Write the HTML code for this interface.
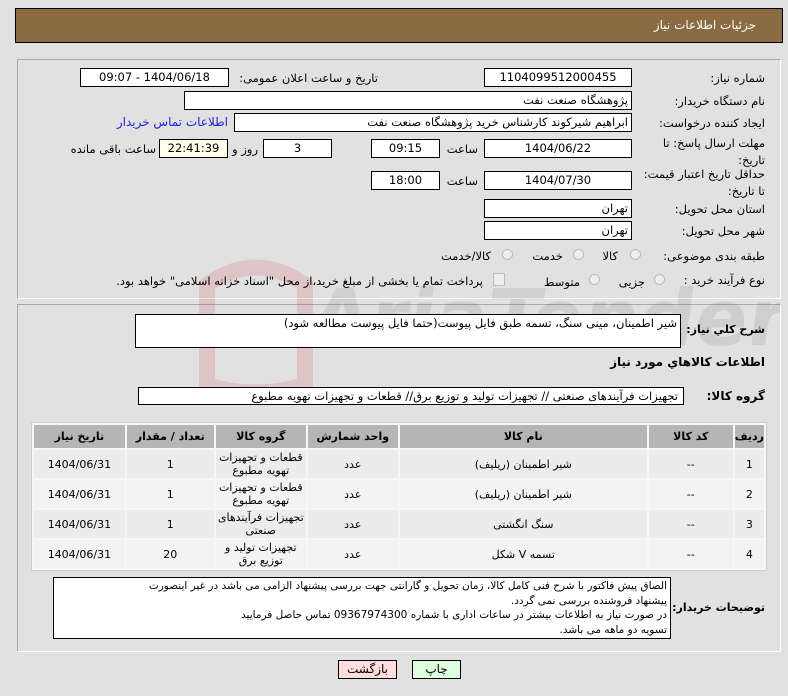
<!DOCTYPE html>
<html><head><meta charset="utf-8"><style>
body{margin:0;width:788px;height:696px;background:#e1e1e1;font-family:"DejaVu Sans","Liberation Sans",sans-serif;font-size:11.5px;color:#000;position:relative;overflow:hidden;direction:rtl}
.a{position:absolute;white-space:nowrap}
.box{position:absolute;background:#fff;border:1px solid #000;box-sizing:border-box;text-align:center;line-height:17px;white-space:nowrap;overflow:hidden}
.lbl{position:absolute;white-space:nowrap;text-align:right}
.panel{position:absolute;border:1px solid #a8a8a8;box-sizing:border-box;border-right-color:#fff;border-bottom-color:#fff}
.rad{position:absolute;width:11px;height:11px;border:1px solid #bbb;border-radius:50%;background:#eee;box-sizing:border-box}
table{position:absolute;border-collapse:separate;border-spacing:2px;background:#f7f7f7;border:1px solid #ccc}
th{background:#b5b5b5;font-weight:bold;height:23px;font-size:11px;padding:0}
td{background:#ececec;text-align:center;height:28px;font-size:11px;line-height:13px;padding:0}
tr.o td{background:#f3f3f3}
.btn{position:absolute;border:1px solid #000;box-sizing:border-box;text-align:center;line-height:16px;font-size:12px}
</style></head><body>
<div class="a" style="left:15px;top:8px;width:768px;height:35px;background:#8b6b42;border:1px solid #000;box-sizing:border-box"></div>
<div class="a" style="right:32px;top:18px;color:#fff;font-size:12px">جزئیات اطلاعات نیاز</div>
<div class="panel" style="left:17px;top:59px;width:764px;height:240px"></div>
<div class="panel" style="left:17px;top:304px;width:764px;height:348px"></div>

<svg class="a" style="left:195px;top:250px;opacity:.12" width="585" height="150"><path d="M12 135 L12 35 Q60 0 110 35 L110 135 Q60 150 12 135Z" fill="none" stroke="#c00" stroke-width="16"/><text x="125" y="95" font-size="78" font-weight="bold" fill="#555" font-family="DejaVu Sans" direction="ltr" transform="skewX(-8)">AriaTender.neT</text></svg>

<div class="lbl" style="right:23px;top:71px">شماره نیاز:</div>
<div class="box" style="left:484px;top:68px;width:148px;height:19px">1104099512000455</div>
<div class="lbl" style="right:410px;top:71px">تاریخ و ساعت اعلان عمومی:</div>
<div class="box" style="left:80px;top:68px;width:149px;height:19px">1404/06/18 - 09:07</div>

<div class="lbl" style="right:23px;top:94px">نام دستگاه خریدار:</div>
<div class="box" style="left:184px;top:91px;width:448px;height:19px;text-align:right;padding-right:3px">پژوهشگاه صنعت نفت</div>

<div class="lbl" style="right:23px;top:116px">ایجاد کننده درخواست:</div>
<div class="box" style="left:234px;top:113px;width:398px;height:19px;text-align:right;padding-right:3px">ابراهیم شیرکوند کارشناس خرید پژوهشگاه صنعت نفت</div>
<div class="lbl" style="right:560px;top:115px;color:#2222dd;font-size:12px">اطلاعات تماس خریدار</div>

<div class="lbl" style="right:23px;top:135px;line-height:17px">مهلت ارسال پاسخ: تا<br>تاریخ:</div>
<div class="box" style="left:484px;top:139px;width:148px;height:19px">1404/06/22</div>
<div class="lbl" style="right:310px;top:142px">ساعت</div>
<div class="box" style="left:371px;top:139px;width:69px;height:19px">09:15</div>
<div class="box" style="left:263px;top:139px;width:69px;height:19px">3</div>
<div class="lbl" style="right:530px;top:142px">روز و</div>
<div class="box" style="left:159px;top:139px;width:69px;height:19px;background:#ffffea">22:41:39</div>
<div class="lbl" style="right:632px;top:142px">ساعت باقی مانده</div>

<div class="lbl" style="right:23px;top:166px;line-height:17px">حداقل تاریخ اعتبار قیمت:<br>تا تاریخ:</div>
<div class="box" style="left:484px;top:171px;width:148px;height:19px">1404/07/30</div>
<div class="lbl" style="right:310px;top:174px">ساعت</div>
<div class="box" style="left:371px;top:171px;width:69px;height:19px">18:00</div>

<div class="lbl" style="right:23px;top:202px">استان محل تحویل:</div>
<div class="box" style="left:484px;top:199px;width:148px;height:19px;text-align:right;padding-right:3px">تهران</div>
<div class="lbl" style="right:23px;top:224px">شهر محل تحویل:</div>
<div class="box" style="left:484px;top:221px;width:148px;height:19px;text-align:right;padding-right:3px">تهران</div>

<div class="lbl" style="right:23px;top:249px">طبقه بندی موضوعی:</div>
<div class="rad" style="left:630px;top:249px"></div><div class="lbl" style="right:170px;top:249px">کالا</div>
<div class="rad" style="left:573px;top:249px"></div><div class="lbl" style="right:225px;top:249px">خدمت</div>
<div class="rad" style="left:502px;top:249px"></div><div class="lbl" style="right:297px;top:249px">کالا/خدمت</div>

<div class="lbl" style="right:23px;top:273px">نوع فرآیند خرید :</div>
<div class="rad" style="left:654px;top:274px"></div><div class="lbl" style="right:143px;top:275px">جزیی</div>
<div class="rad" style="left:589px;top:274px"></div><div class="lbl" style="right:208px;top:275px">متوسط</div>
<div class="a" style="left:493px;top:273px;width:10px;height:11px;border:1px solid #bbb;background:#eee"></div>
<div class="lbl" style="right:305px;top:274px">پرداخت تمام یا بخشی از مبلغ خرید،از محل "اسناد خزانه اسلامی" خواهد بود.</div>

<div class="lbl" style="right:23px;top:323px;font-weight:bold;font-size:11px">شرح کلي نیاز:</div>
<div class="box" style="left:135px;top:314px;width:546px;height:34px;text-align:right;padding-right:3px;background:#fff">شیر اطمینان، مینی سنگ، تسمه طبق فایل پیوست(حتما فایل پیوست مطالعه شود)</div>
<div class="lbl" style="right:23px;top:355px;font-weight:bold;font-size:12px">اطلاعات کالاهاي مورد نیاز</div>
<div class="lbl" style="right:23px;top:389px;font-weight:bold;font-size:12px">گروه کالا:</div>
<div class="box" style="left:138px;top:387px;width:546px;height:18px;text-align:right;padding-right:5px">تجهیزات فرآیندهای صنعتی // تجهیزات تولید و توزیع برق//  قطعات و تجهیزات تهویه مطبوع</div>

<table style="left:31px;top:422px;width:736px">
<tr><th style="width:25px">ردیف</th><th style="width:84px">کد کالا</th><th style="width:247px">نام کالا</th><th style="width:90px">واحد شمارش</th><th style="width:90px">گروه کالا</th><th style="width:87px">تعداد / مقدار</th><th>تاریخ نیاز</th></tr>
<tr><td>1</td><td>--</td><td>شیر اطمینان (ریلیف)</td><td>عدد</td><td>قطعات و تجهیزات<br>تهویه مطبوع</td><td>1</td><td>1404/06/31</td></tr>
<tr class="o"><td>2</td><td>--</td><td>شیر اطمینان (ریلیف)</td><td>عدد</td><td>قطعات و تجهیزات<br>تهویه مطبوع</td><td>1</td><td>1404/06/31</td></tr>
<tr><td>3</td><td>--</td><td>سنگ انگشتی</td><td>عدد</td><td>تجهیزات فرآیندهای<br>صنعتی</td><td>1</td><td>1404/06/31</td></tr>
<tr class="o"><td>4</td><td>--</td><td>تسمه V شکل</td><td>عدد</td><td>تجهیزات تولید و<br>توزیع برق</td><td>20</td><td>1404/06/31</td></tr>
</table>

<div class="lbl" style="right:23px;top:601px;font-weight:bold;font-size:11px">توضیحات خریدار:</div>
<div class="box" style="left:53px;top:577px;width:618px;height:62px;text-align:right;padding-right:3px;padding-top:1px;line-height:14.5px;font-size:10.5px">الصاق پیش فاکتور با شرح فنی کامل کالا، زمان تحویل و گارانتی جهت بررسی پیشنهاد الزامی می باشد در غیر اینصورت<br>پیشنهاد فروشنده بررسی نمی گردد.<br>در صورت نیاز به اطلاعات بیشتر در ساعات اداری با شماره 09367974300 تماس حاصل فرمایید<br>تسویه دو ماهه می باشد.</div>

<div class="btn" style="left:338px;top:660px;width:59px;height:19px;background:#fdd">بازگشت</div>
<div class="btn" style="left:412px;top:660px;width:49px;height:19px;background:#dfd">چاپ</div>
</body></html>
